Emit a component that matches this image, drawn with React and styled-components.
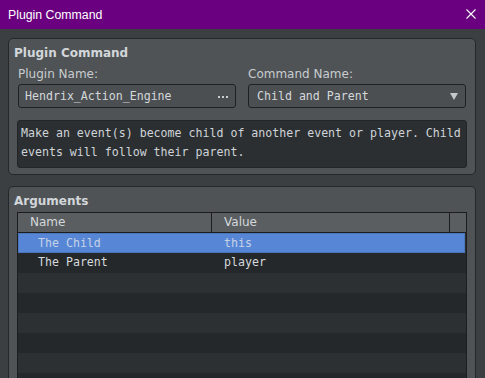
import React from 'react';
import styled, { createGlobalStyle } from 'styled-components';

const GlobalStyle = createGlobalStyle`
  html, body {
    margin: 0;
    padding: 0;
    background: #3c3f41;
    overflow: hidden;
  }
`;

const Window = styled.div`
  width: 485px;
  height: 378px;
  display: flex;
  flex-direction: column;
  background: #3c3f41;
  overflow: hidden;
`;

const TitleBar = styled.div`
  height: 29px;
  flex: 0 0 29px;
  background: #6a0080;
  color: #ffffff;
  font-family: "Liberation Sans", "Noto Sans", sans-serif;
  font-size: 12.3px;
  display: flex;
  align-items: center;
  justify-content: space-between;
  padding: 0 9px 0 8px;
`;

const CloseIcon = styled.svg`
  width: 10px;
  height: 10px;
  margin-top: -1px;
`;

const Content = styled.div`
  flex: 1;
  display: flex;
  flex-direction: column;
  gap: 11px;
  padding: 9px 9px 0 8px;
  min-height: 0;
`;

const Group = styled.section`
  border: 1px solid #25282a;
  border-radius: 5px;
  background: #4f5355;
  padding: 0 8px 6px 8px;
  display: flex;
  flex-direction: column;
  flex: ${p => (p.$grow ? '1 0 230px' : '0 0 auto')};
`;

const GroupTitle = styled.div`
  font-family: "DejaVu Sans", sans-serif;
  font-weight: bold;
  font-size: 12px;
  line-height: 16px;
  color: #d2d6da;
  padding-top: 6px;
  margin-left: -3px;
`;

const FieldRow = styled.div`
  display: grid;
  grid-template-columns: 1fr 1fr;
  column-gap: 12px;
  padding: 0 1px;
  margin-top: 5px;
`;

const Field = styled.div`
  display: flex;
  flex-direction: column;
  gap: 2px;
`;

const Label = styled.label`
  font-family: "DejaVu Sans", sans-serif;
  font-size: 12px;
  line-height: 16px;
  color: #c8ccd0;
`;

const InputBox = styled.div`
  height: 24px;
  box-sizing: border-box;
  border: 1px solid #1f2224;
  border-radius: 3px;
  background: #4b4f51;
  display: flex;
  align-items: center;
  justify-content: space-between;
  padding: 0 7px 0 ${p => p.$pad}px;
  font-family: "DejaVu Sans Mono", monospace;
  font-size: 11.6px;
  color: #d4d8dc;
`;

const Description = styled.div`
  margin-top: 12px;
  height: 48px;
  box-sizing: border-box;
  border: 1px solid #222527;
  border-radius: 3px;
  background: #2b2f32;
  padding: 3px 3px 0 3px;
  font-family: "DejaVu Sans Mono", monospace;
  font-size: 11.6px;
  line-height: 19px;
  color: #d0d4d8;
  white-space: pre;
`;

const Table = styled.div`
  margin-top: 3px;
  flex: 1;
  border: 1px solid #1b1d1f;
  display: flex;
  flex-direction: column;
  background: repeating-linear-gradient(
    to bottom,
    #25282a 0px,
    #25282a 20px,
    #2c3033 20px,
    #2c3033 40px
  );
`;

const HeaderRow = styled.div`
  display: flex;
  height: 19px;
  border-bottom: 1px solid #1b1d1f;
  background: #5a5e60;
`;

const HeaderCell = styled.div`
  box-sizing: border-box;
  width: ${p => (p.$w ? `${p.$w}px` : 'auto')};
  flex: ${p => (p.$w ? '0 0 auto' : '1')};
  border-right: ${p => (p.$w ? '1px solid #1b1d1f' : 'none')};
  padding-left: 12px;
  font-family: "DejaVu Sans", sans-serif;
  font-size: 12px;
  line-height: 19px;
  color: #d4d8dc;
`;

const Row = styled.div`
  display: flex;
  box-sizing: border-box;
  height: ${p => p.$h}px;
  background: ${p => (p.$selected ? '#5786d6' : '#25282a')};
  border: ${p => (p.$selected ? '1px solid #4b76bc' : 'none')};
  color: ${p => (p.$selected ? '#c6d2e6' : '#d6dadd')};
  font-family: "DejaVu Sans Mono", monospace;
  font-size: 11.6px;
  align-items: center;
  margin-right: 1px;
`;

const Cell = styled.div`
  box-sizing: border-box;
  width: ${p => (p.$w ? `${p.$w}px` : 'auto')};
  flex: ${p => (p.$w ? '0 0 auto' : '1')};
  padding-left: ${p => p.$pad}px;
`;

const Dots = () => (
  <svg width="10" height="3" viewBox="0 0 10 3">
    <rect x="0" y="1" width="2" height="2" fill="#c8ccd0" />
    <rect x="4" y="1" width="2" height="2" fill="#c8ccd0" />
    <rect x="8" y="1" width="2" height="2" fill="#c8ccd0" />
  </svg>
);

const Arrow = () => (
  <svg width="8" height="7" viewBox="0 0 8 7">
    <path d="M0 0 H8 L4 7 Z" fill="#c4c8cc" />
  </svg>
);

const args = [
  { name: 'The Child', value: 'this', selected: true },
  { name: 'The Parent', value: 'player' },
];

export default function App() {
  return (
    <Window>
      <GlobalStyle />
      <TitleBar>
        <span>Plugin Command</span>
        <CloseIcon viewBox="0 0 10 10">
          <path d="M0.5 0.5 L9.5 9.5 M9.5 0.5 L0.5 9.5" stroke="#ffffff" strokeWidth="1.1" />
        </CloseIcon>
      </TitleBar>
      <Content>
        <Group>
          <GroupTitle>Plugin Command</GroupTitle>
          <FieldRow>
            <Field>
              <Label>Plugin Name:</Label>
              <InputBox $pad={6}>
                <span>Hendrix_Action_Engine</span>
                <Dots />
              </InputBox>
            </Field>
            <Field>
              <Label>Command Name:</Label>
              <InputBox $pad={8}>
                <span>Child and Parent</span>
                <Arrow />
              </InputBox>
            </Field>
          </FieldRow>
          <Description>
            {'Make an event(s) become child of another event or player. Child\nevents will follow their parent.'}
          </Description>
        </Group>
        <Group $grow>
          <GroupTitle>Arguments</GroupTitle>
          <Table>
            <HeaderRow>
              <HeaderCell $w={194}>Name</HeaderCell>
              <HeaderCell $w={238}>Value</HeaderCell>
              <HeaderCell />
            </HeaderRow>
            {args.map((a, i) => (
              <Row key={a.name} $selected={a.selected} $h={i === 0 ? 20 : 18}>
                <Cell $w={a.selected ? 193 : 194} $pad={a.selected ? 19 : 20}>{a.name}</Cell>
                <Cell $pad={12}>{a.value}</Cell>
              </Row>
            ))}
          </Table>
        </Group>
      </Content>
    </Window>
  );
}
